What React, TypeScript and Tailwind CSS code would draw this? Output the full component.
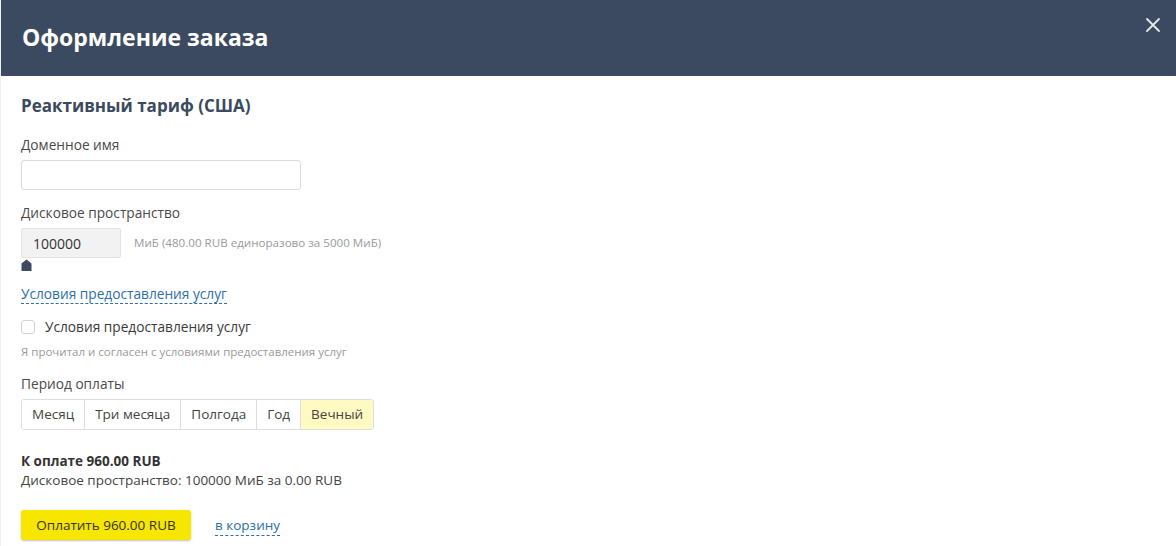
import { useState } from 'react';

const periods = ['Месяц', 'Три месяца', 'Полгода', 'Год', 'Вечный'];

export default function App() {
  const [period, setPeriod] = useState('Вечный');

  return (
    <div className="w-[1176px] h-[546px] overflow-hidden bg-white border-l border-[#eef0f2]" style={{ fontFamily: '"Open Sans", "Noto Sans", sans-serif' }}>
      <div className="relative h-[76px] bg-[#3b4a60] flex items-center px-[21px]">
        <h1 className="text-[23px] font-bold text-white leading-none pb-[1px]">Оформление заказа</h1>
        <button className="absolute right-[12px] top-[14px] w-[22px] h-[22px] flex items-center justify-center text-[#e6e9ee]">
          <svg width="16" height="16" viewBox="0 0 16 16" fill="none" stroke="currentColor" strokeWidth="1.8" strokeLinecap="round">
            <path d="M2 2L14 14M14 2L2 14" />
          </svg>
        </button>
      </div>

      <div className="px-[20px] pt-[19px] text-[#444]">
        <h2 className="text-[17px] font-bold text-[#3b4a5e] leading-[22px]">Реактивный тариф (США)</h2>

        <div className="mt-[18px] text-[13.7px] leading-[20px] text-[#4a4a4a]">Доменное имя</div>
        <input className="mt-[5px] block w-[280px] h-[30px] border border-[#dcdcdc] rounded-[3px] px-2 text-[14px] outline-none" />

        <div className="mt-[13px] text-[13.7px] leading-[20px] text-[#4a4a4a]">Дисковое пространство</div>
        <div className="mt-[5px] flex items-center">
          <div className="w-[100px] h-[30px] bg-[#f2f2f2] border border-[#e2e2e2] rounded-[2px] flex items-center pl-[11px] text-[14px] text-[#333]">100000</div>
          <span className="ml-[13px] text-[11.6px] text-[#9a9a9a]">МиБ (480.00 RUB единоразово за 5000 МиБ)</span>
        </div>
        <div className="mt-[1px] h-[13px]">
          <svg width="11" height="12" viewBox="0 0 11 12">
            <path d="M5.5 0.5L10.5 4.5V12H0.5V4.5Z" fill="#3b4a60" />
          </svg>
        </div>

        <div className="mt-[9px]">
          <a className="text-[13.7px] text-[#2d6ea8] leading-[20px] border-b border-dashed border-[#2d6ea8] cursor-pointer">Условия предоставления услуг</a>
        </div>

        <label className="mt-[12px] flex items-center gap-[10px] text-[13.7px] text-[#3a3a3a] leading-[20px]">
          <span className="w-[14px] h-[14px] border border-[#d2d2d2] rounded-[3px] bg-white" />
          Условия предоставления услуг
        </label>
        <div className="mt-[8px] text-[11.5px] text-[#9a9a9a] leading-[14px]">Я прочитал и согласен с условиями предоставления услуг</div>

        <div className="mt-[15px] text-[13.7px] leading-[20px] text-[#4a4a4a]">Период оплаты</div>
        <div className="mt-[5px] inline-flex border border-[#dedede] rounded-[3px] overflow-hidden">
          {periods.map((p, i) => (
            <button
              key={p}
              onClick={() => setPeriod(p)}
              className={`h-[29px] px-[10px] text-[13.5px] text-[#444] ${i > 0 ? 'border-l border-[#dedede]' : ''} ${period === p ? 'bg-[#fff9c2]' : 'bg-white'}`}
            >
              {p}
            </button>
          ))}
        </div>

        <div className="mt-[22px] text-[13.5px] font-bold text-[#333] leading-[18px]">К оплате 960.00 RUB</div>
        <div className="mt-0 text-[13.5px] text-[#444] leading-[20px]">Дисковое пространство: 100000 МиБ за 0.00 RUB</div>

        <div className="mt-[20px] flex items-center">
          <button className="w-[170px] h-[30px] bg-[#f7e600] rounded-[3px] shadow-[0_1px_2px_rgba(0,0,0,0.25)] text-[13.5px] text-[#333]">Оплатить 960.00 RUB</button>
          <a className="ml-[24px] text-[13.5px] text-[#2d6ea8] leading-[20px] border-b border-dashed border-[#2d6ea8] cursor-pointer">в корзину</a>
        </div>
      </div>
    </div>
  );
}
